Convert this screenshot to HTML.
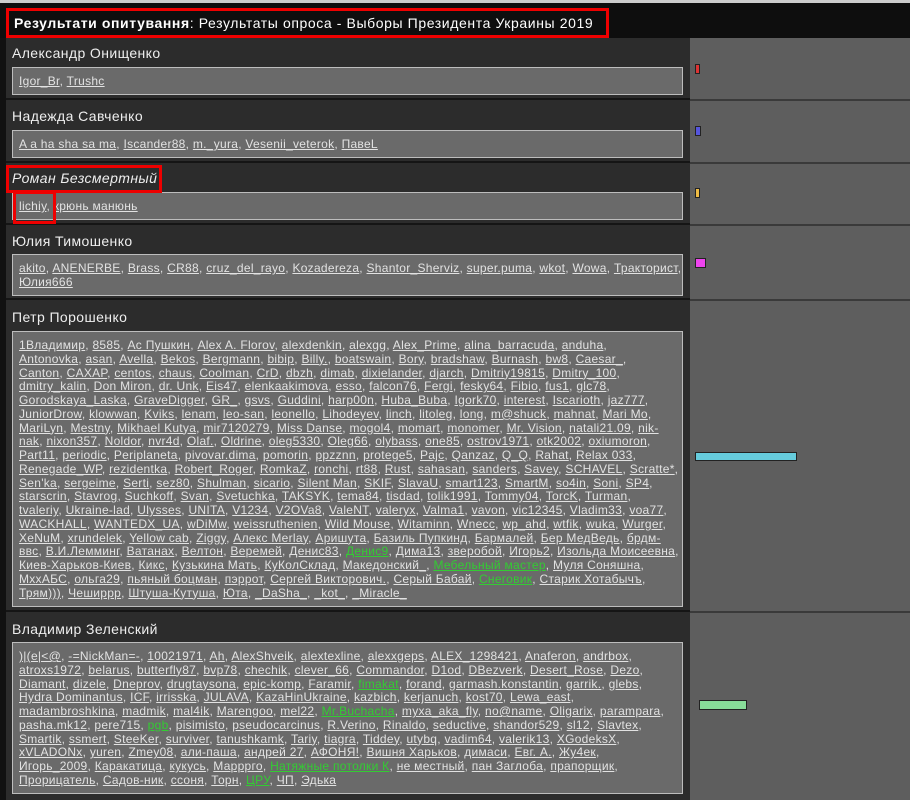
<!DOCTYPE html>
<html><head><meta charset="utf-8"><style>
*{margin:0;padding:0;box-sizing:border-box}
body{width:910px;height:800px;overflow:hidden;background:#111;font-family:"Liberation Sans","DejaVu Sans",sans-serif;position:relative}
.top{position:absolute;left:0;top:0;width:910px;height:3px;background:#ccc}
.hdr{position:absolute;left:0;top:3px;width:910px;height:35px;background:#0e0e0e}
.ttl{position:absolute;left:6px;top:8px;width:603px;height:30px;border:3px solid #e00;color:#fff;font-size:14px;line-height:24px;padding-left:5px;white-space:nowrap;letter-spacing:0.6px}
.ttl b{font-weight:bold}
.right{position:absolute;left:690px;top:38px;width:220px;height:762px;background:#5e5e5e}
.row{position:absolute;left:6px;width:684px;background:#2c2c2c;border-bottom:2px solid #151515}
.rsep{position:absolute;left:690px;width:220px;height:2px;background:#3a3a3a}
.nm{position:absolute;left:6px;color:#eee;font-size:14px;white-space:nowrap;letter-spacing:0.4px}
.box{position:absolute;left:6px;width:671px;background:#6a6a6a;border:1px solid #bdbdbd;padding:6px 2px 0 6px}
.box div{white-space:nowrap;font-size:12px;line-height:13.75px;color:#ddd;overflow:hidden;letter-spacing:0.28px}
u{color:#e2e2e2}
.g{color:#3c3}
.bar{position:absolute;border:1px solid #222}
.red{position:absolute;border:3px solid #e00}
</style></head><body>
<div class="top"></div>
<div class="hdr"></div>
<div class="ttl"><b>Результати опитування</b>: Результаты опроса - Выборы Президента Украины 2019</div>
<div class="right"></div>

<div class="row" style="top:38px;height:62px"><div class="nm" style="top:7px">Александр Онищенко</div>
<div class="box" style="top:29px;height:28px;padding-top:7px"><div><u>Igor_Br</u>, <u>Trushc</u></div></div></div>
<div class="rsep" style="top:99px"></div>

<div class="row" style="top:100px;height:63px"><div class="nm" style="top:8px">Надежда Савченко</div>
<div class="box" style="top:30px;height:28px;padding-top:7px"><div><u>A a ha sha sa ma</u>, <u>Iscander88</u>, <u>m._yura</u>, <u>Vesenii_veterok</u>, <u>ПавеL</u></div></div></div>
<div class="rsep" style="top:162px"></div>

<div class="row" style="top:163px;height:62px"><div class="nm" style="top:7px;font-style:italic">Роман Безсмертный</div>
<div class="box" style="top:29px;height:28px;padding-top:7px"><div><u>lichiy</u>, <u>крюнь манюнь</u></div></div></div>
<div class="rsep" style="top:224px"></div>

<div class="row" style="top:225px;height:75px"><div class="nm" style="top:8px">Юлия Тимошенко</div>
<div class="box" style="top:29px;height:42px;padding-top:7px"><div><u>akito</u>, <u>ANENERBE</u>, <u>Brass</u>, <u>CR88</u>, <u>cruz_del_rayo</u>, <u>Kozadereza</u>, <u>Shantor_Sherviz</u>, <u>super.puma</u>, <u>wkot</u>, <u>Wowa</u>, <u>Тракторист</u>,</div><div><u>Юлия666</u></div></div></div>
<div class="rsep" style="top:299px"></div>

<div class="row" style="top:300px;height:312px"><div class="nm" style="top:9px">Петр Порошенко</div>
<div class="box" style="top:31px;height:276px;padding-top:7px">
<div><u>1Владимир</u>, <u>8585</u>, <u>Ас Пушкин</u>, <u>Alex A. Florov</u>, <u>alexdenkin</u>, <u>alexgg</u>, <u>Alex_Prime</u>, <u>alina_barracuda</u>, <u>anduha</u>,</div>
<div><u>Antonovka</u>, <u>asan</u>, <u>Avella</u>, <u>Bekos</u>, <u>Bergmann</u>, <u>bibip</u>, <u>Billy.</u>, <u>boatswain</u>, <u>Bory</u>, <u>bradshaw</u>, <u>Burnash</u>, <u>bw8</u>, <u>Caesar_</u>,</div>
<div><u>Canton</u>, <u>CAXAP</u>, <u>centos</u>, <u>chaus</u>, <u>Coolman</u>, <u>CrD</u>, <u>dbzh</u>, <u>dimab</u>, <u>dixielander</u>, <u>djarch</u>, <u>Dmitriy19815</u>, <u>Dmitry_100</u>,</div>
<div><u>dmitry_kalin</u>, <u>Don Miron</u>, <u>dr. Unk</u>, <u>Eis47</u>, <u>elenkaakimova</u>, <u>esso</u>, <u>falcon76</u>, <u>Fergi</u>, <u>fesky64</u>, <u>Fibio</u>, <u>fus1</u>, <u>glc78</u>,</div>
<div><u>Gorodskaya_Laska</u>, <u>GraveDigger</u>, <u>GR_</u>, <u>gsvs</u>, <u>Guddini</u>, <u>harp00n</u>, <u>Huba_Buba</u>, <u>Igork70</u>, <u>interest</u>, <u>Iscarioth</u>, <u>jaz777</u>,</div>
<div><u>JuniorDrow</u>, <u>klowwan</u>, <u>Kviks</u>, <u>lenam</u>, <u>leo-san</u>, <u>leonello</u>, <u>Lihodeyev</u>, <u>linch</u>, <u>litoleg</u>, <u>long</u>, <u>m@shuck</u>, <u>mahnat</u>, <u>Mari Mo</u>,</div>
<div><u>MariLyn</u>, <u>Mestny</u>, <u>Mikhael Kutya</u>, <u>mir7120279</u>, <u>Miss Danse</u>, <u>mogol4</u>, <u>momart</u>, <u>monomer</u>, <u>Mr. Vision</u>, <u>natali21.09</u>, <u>nik-</u></div>
<div><u>nak</u>, <u>nixon357</u>, <u>Noldor</u>, <u>nvr4d</u>, <u>Olaf.</u>, <u>Oldrine</u>, <u>oleg5330</u>, <u>Oleg66</u>, <u>olybass</u>, <u>one85</u>, <u>ostrov1971</u>, <u>otk2002</u>, <u>oxiumoron</u>,</div>
<div><u>Part11</u>, <u>periodic</u>, <u>Periplaneta</u>, <u>pivovar.dima</u>, <u>pomorin</u>, <u>ppzznn</u>, <u>protege5</u>, <u>Pajc</u>, <u>Qanzaz</u>, <u>Q_Q</u>, <u>Rahat</u>, <u>Relax 033</u>,</div>
<div><u>Renegade_WP</u>, <u>rezidentka</u>, <u>Robert_Roger</u>, <u>RomkaZ</u>, <u>ronchi</u>, <u>rt88</u>, <u>Rust</u>, <u>sahasan</u>, <u>sanders</u>, <u>Savey</u>, <u>SCHAVEL</u>, <u>Scratte*</u>,</div>
<div><u>Sen'ka</u>, <u>sergeime</u>, <u>Serti</u>, <u>sez80</u>, <u>Shulman</u>, <u>sicario</u>, <u>Silent Man</u>, <u>SKIF</u>, <u>SlavaU</u>, <u>smart123</u>, <u>SmartM</u>, <u>so4in</u>, <u>Soni</u>, <u>SP4</u>,</div>
<div><u>starscrin</u>, <u>Stavrog</u>, <u>Suchkoff</u>, <u>Svan</u>, <u>Svetuchka</u>, <u>TAKSYK</u>, <u>tema84</u>, <u>tisdad</u>, <u>tolik1991</u>, <u>Tommy04</u>, <u>TorcK</u>, <u>Turman</u>,</div>
<div><u>tvaleriy</u>, <u>Ukraine-lad</u>, <u>Ulysses</u>, <u>UNITA</u>, <u>V1234</u>, <u>V2OVa8</u>, <u>ValeNT</u>, <u>valeryx</u>, <u>Valma1</u>, <u>vavon</u>, <u>vic12345</u>, <u>Vladim33</u>, <u>voa77</u>,</div>
<div><u>WACKHALL</u>, <u>WANTEDX_UA</u>, <u>wDiMw</u>, <u>weissruthenien</u>, <u>Wild Mouse</u>, <u>Witaminn</u>, <u>Wnecc</u>, <u>wp_ahd</u>, <u>wtfik</u>, <u>wuka</u>, <u>Wurger</u>,</div>
<div><u>XeNuM</u>, <u>xrundelek</u>, <u>Yellow cab</u>, <u>Ziggy</u>, <u>Алекс Merlay</u>, <u>Аришута</u>, <u>Базиль Пупкинд</u>, <u>Бармалей</u>, <u>Бер МедВедь</u>, <u>брдм-</u></div>
<div><u>ввс</u>, <u>В.И.Лемминг</u>, <u>Ватанах</u>, <u>Велтон</u>, <u>Веремей</u>, <u>Денис83</u>, <u class="g">Денис9</u>, <u>Дима13</u>, <u>зверобой</u>, <u>Игорь2</u>, <u>Изольда Моисеевна</u>,</div>
<div><u>Киев-Харьков-Киев</u>, <u>Кикс</u>, <u>Кузькина Мать</u>, <u>КуКолСклад</u>, <u>Македонский_</u>, <u class="g">Мебельный мастер</u>, <u>Муля Соняшна</u>,</div>
<div><u>МххАБС</u>, <u>ольга29</u>, <u>пьяный боцман</u>, <u>пэррот</u>, <u>Сергей Викторович.</u>, <u>Серый Бабай</u>, <u class="g">Снеговик</u>, <u>Старик Хотабычъ</u>,</div>
<div><u>Трям)))</u>, <u>Чеширрр</u>, <u>Штуша-Кутуша</u>, <u>Юта</u>, <u>_DaSha_</u>, <u>_kot_</u>, <u>_Miracle_</u></div>
</div></div>
<div class="rsep" style="top:611px"></div>

<div class="row" style="top:612px;height:188px;border-bottom:none"><div class="nm" style="top:9px">Владимир Зеленский</div>
<div class="box" style="top:30px;height:152px;padding-top:7px">
<div><u>)|(e|&lt;@</u>, <u>-=NickMan=-</u>, <u>10021971</u>, <u>Ah</u>, <u>AlexShveik</u>, <u>alextexline</u>, <u>alexxgeps</u>, <u>ALEX_1298421</u>, <u>Anaferon</u>, <u>andrbox</u>,</div>
<div><u>atroxs1972</u>, <u>belarus</u>, <u>butterfly87</u>, <u>bvp78</u>, <u>chechik</u>, <u>clever_66</u>, <u>Commandor</u>, <u>D1od</u>, <u>DBezverk</u>, <u>Desert_Rose</u>, <u>Dezo</u>,</div>
<div><u>Diamant</u>, <u>dizele</u>, <u>Dneprov</u>, <u>drugtaysona</u>, <u>epic-komp</u>, <u>Faramir</u>, <u class="g">fimakat</u>, <u>forand</u>, <u>garmash.konstantin</u>, <u>garrik.</u>, <u>glebs</u>,</div>
<div><u>Hydra Dominantus</u>, <u>ICF</u>, <u>irrisska</u>, <u>JULAVA</u>, <u>KazaHinUkraine</u>, <u>kazbich</u>, <u>kerjanuch</u>, <u>kost70</u>, <u>Lewa_east</u>,</div>
<div><u>madambroshkina</u>, <u>madmik</u>, <u>mal4ik</u>, <u>Marengoo</u>, <u>mel22</u>, <u class="g">Mr.Buchacha</u>, <u>myxa_aka_fly</u>, <u>no@name</u>, <u>Oligarix</u>, <u>parampara</u>,</div>
<div><u>pasha.mk12</u>, <u>pere715</u>, <u class="g">pgb</u>, <u>pisimisto</u>, <u>pseudocarcinus</u>, <u>R.Verino</u>, <u>Rinaldo</u>, <u>seductive</u>, <u>shandor529</u>, <u>sl12</u>, <u>Slavtex</u>,</div>
<div><u>Smartik</u>, <u>ssmert</u>, <u>SteeKer</u>, <u>surviver</u>, <u>tanushkamk</u>, <u>Tariy</u>, <u>tiagra</u>, <u>Tiddey</u>, <u>utybq</u>, <u>vadim64</u>, <u>valerik13</u>, <u>XGodeksX</u>,</div>
<div><u>xVLADONx</u>, <u>yuren</u>, <u>Zmey08</u>, <u>али-паша</u>, <u>андрей 27</u>, <u>АФОНЯ!</u>, <u>Вишня Харьков</u>, <u>димаси</u>, <u>Евг. А.</u>, <u>Жу4ек</u>,</div>
<div><u>Игорь_2009</u>, <u>Каракатица</u>, <u>кукусь</u>, <u>Марррго</u>, <u class="g">Натяжные потолки К</u>, <u>не местный</u>, <u>пан Заглоба</u>, <u>прапорщик</u>,</div>
<div><u>Прорицатель</u>, <u>Садов-ник</u>, <u>ссоня</u>, <u>Торн</u>, <u class="g">ЦРУ</u>, <u>ЧП</u>, <u>Эдька</u></div>
</div></div>

<div class="bar" style="left:695px;top:64px;width:5px;height:10px;background:#d33"></div>
<div class="bar" style="left:695px;top:126px;width:6px;height:10px;background:#55d"></div>
<div class="bar" style="left:695px;top:188px;width:5px;height:10px;background:#eb4"></div>
<div class="bar" style="left:695px;top:258px;width:11px;height:10px;background:#e4e"></div>
<div class="bar" style="left:695px;top:452px;width:102px;height:9px;background:#6cd"></div>
<div class="bar" style="left:699px;top:700px;width:48px;height:10px;background:#8d9"></div>

<div class="red" style="left:6px;top:165px;width:156px;height:28px"></div>
<div class="red" style="left:13px;top:191px;width:43px;height:33px"></div>
</body></html>
